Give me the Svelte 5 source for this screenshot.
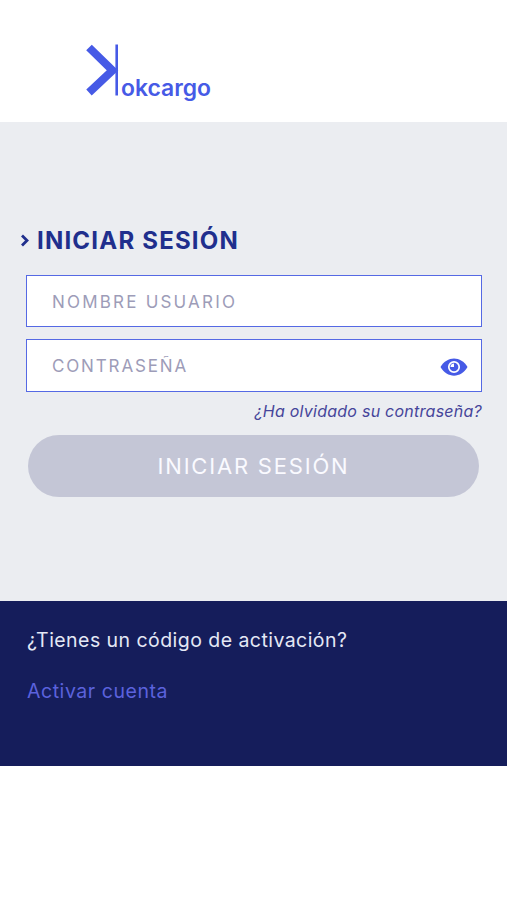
<script>
let username = "";
let password = "";
let showPassword = false;

const togglePassword = () => {
    showPassword = !showPassword;
}

$: disabled = username == "" || password == "";
</script>

<style>
  :global(body) {
    background-color: #fff;
    font-family: Inter, "Open Sans", sans-serif;
  }

  #login {
    height: 900px;
    overflow: hidden;
  }

  header {
    height: 122px;
    padding: 40px 0 0 82px;
    box-sizing: border-box;
  }

  header svg {
    display: block;
  }

  .logo-name {
    font-family: Inter, sans-serif;
    font-size: 22.5px;
    font-weight: 600;
    fill: #465ae6;
  }

  main {
    height: 479px;
    padding: 101px 25px 0 26px;
    box-sizing: border-box;
    background-color: #ebedf1;
  }

  h1 {
    display: flex;
    align-items: center;
    height: 35px;
    margin: 0 0 17px -6px;
    color: #202f8d;
    font-size: 24px;
    font-weight: 700;
    letter-spacing: 1.2px;
    white-space: nowrap;
  }

  h1 svg {
    margin-right: 6px;
  }

  .field {
    display: flex;
    align-items: center;
    height: 52px;
    margin-bottom: 12px;
    padding: 1px 13px 0 25px;
    box-sizing: border-box;
    border: 1px solid #5569e4;
    background-color: #fff;
  }

  .field.secret {
    height: 53px;
    margin-bottom: 9px;
  }

  .field input {
    flex: 1;
    min-width: 0;
    padding: 0;
    border: none;
    outline: none;
    background: none;
    color: #202f8d;
    font-family: inherit;
    font-size: 17px;
    letter-spacing: 1.85px;
  }

  .field input::placeholder {
    color: #9d9cb8;
    opacity: 1;
  }

  .field input.user {
    letter-spacing: 2.2px;
  }

  .eye {
    display: flex;
    padding: 1px 0 0;
    border: none;
    background: none;
    cursor: pointer;
  }

  .forgot {
    display: block;
    height: 20px;
    margin: 0 0 14px;
    color: #46459a;
    font-size: 16px;
    font-style: italic;
    letter-spacing: 0.25px;
    line-height: 20px;
    text-align: right;
    text-decoration: none;
    white-space: nowrap;
  }

  .submit {
    display: block;
    width: 451px;
    height: 62px;
    margin-left: 2px;
    padding: 0;
    border: none;
    border-radius: 31px;
    background-color: #c4c6d6;
    color: #fafaff;
    font-family: inherit;
    font-size: 22px;
    letter-spacing: 1.8px;
  }

  footer {
    height: 165px;
    padding: 25px 27px 0;
    box-sizing: border-box;
    background-color: #151d5b;
    font-size: 19.5px;
    line-height: 28px;
  }

  footer p {
    margin: 0 0 23px;
    color: #e4e8f5;
    letter-spacing: 0.45px;
    white-space: nowrap;
  }

  footer a {
    color: #5b62dd;
    text-decoration: none;
    letter-spacing: 0.55px;
  }
</style>

<div id="login">
    <header>
        <svg width="140" height="70" viewBox="0 0 140 70" role="img" aria-label="okcargo">
            <path d="M7 7.5 L30.5 30.5 L7 52.5" fill="none" stroke="#465ae6" stroke-width="8"/>
            <path d="M34.7 4.5 V55.5" stroke="#465ae6" stroke-width="2.6"/>
            <text class="logo-name" x="39" y="55.5" textLength="90" lengthAdjust="spacingAndGlyphs">okcargo</text>
        </svg>
    </header>

    <main>
        <h1>
            <svg width="11" height="14" viewBox="0 0 11 14">
                <path d="M2 1.5 L7 6.5 L2 11.5" fill="none" stroke="#202f8d" stroke-width="2.8"/>
            </svg>
            <span>INICIAR SESIÓN</span>
        </h1>
        <form on:submit|preventDefault>
            <div class="field">
                <input class="user" type="text" placeholder="NOMBRE USUARIO" bind:value={username}>
            </div>
            <div class="field secret">
                <input type={showPassword ? "text" : "password"} placeholder="CONTRASEÑA" value={password} on:input={(e) => password = e.target.value}>
                <button class="eye" type="button" aria-label="Mostrar contraseña" on:click={togglePassword}>
                    <svg width="28" height="20" viewBox="0 0 28 20">
                        <path d="M0.5 10 C7 -1.5 21 -1.5 27.5 10 C21 21.5 7 21.5 0.5 10 Z" fill="#465ae6"/>
                        <circle cx="14" cy="10" r="5.2" fill="#465ae6" stroke="#fff" stroke-width="1.7"/>
                        <path d="M14 6.5 A3.5 3.5 0 0 0 10.5 10 L14 10 Z" fill="#fff"/>
                    </svg>
                </button>
            </div>
            <a class="forgot" href="#recuperar">¿Ha olvidado su contraseña?</a>
            <button class="submit" type="submit" {disabled}>INICIAR SESIÓN</button>
        </form>
    </main>

    <footer>
        <p>¿Tienes un código de activación?</p>
        <a href="#activar">Activar cuenta</a>
    </footer>
</div>
